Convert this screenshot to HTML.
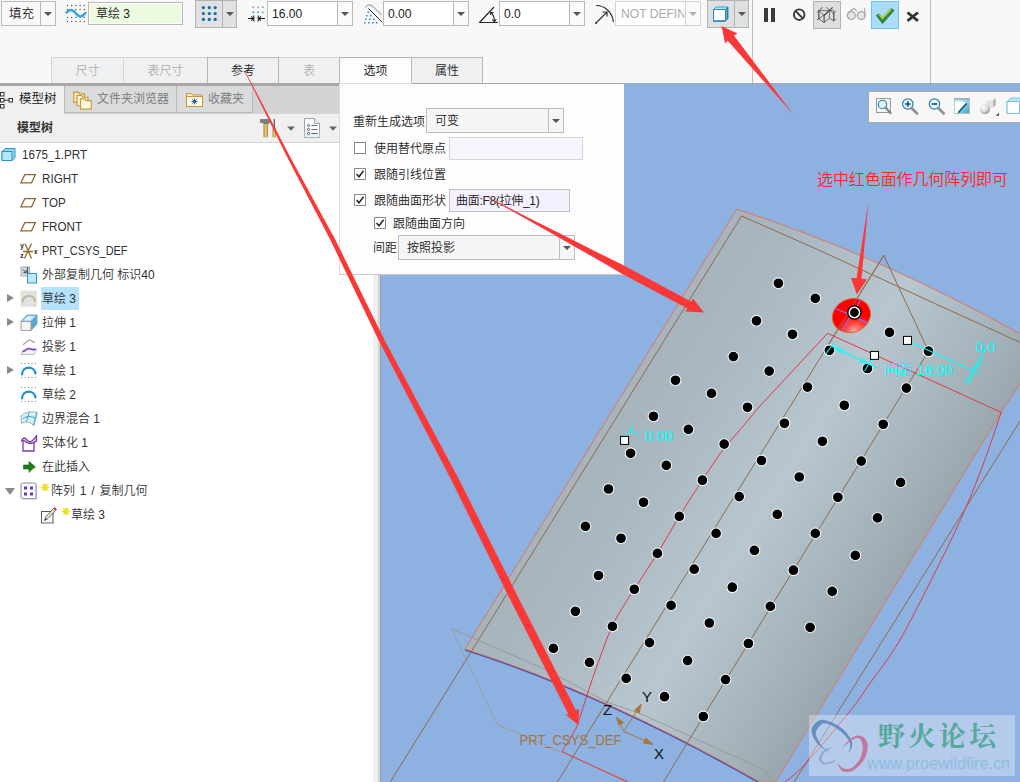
<!DOCTYPE html>
<html lang="zh-CN">
<head>
<meta charset="utf-8">
<title>Creo 几何阵列</title>
<style>
html,body{margin:0;padding:0;}
body{width:1020px;height:782px;overflow:hidden;position:relative;background:#f8f8f8;
 font-family:"Liberation Sans","Noto Sans CJK SC",sans-serif;font-size:12px;color:#222;font-weight:350;}
.abs{position:absolute;}
#ribbon{left:0;top:0;width:1020px;height:83px;background:#f8f8f8;}
#ribline{left:0;top:82px;width:1020px;height:1px;background:#a6a6a6;border-top:1px solid #fff;}
.combo{position:absolute;top:1px;height:23px;border:1px solid #b9b9b9;background:#fff;box-sizing:border-box;}
.combo .txt{position:absolute;left:5px;top:0;line-height:22px;font-size:13px;color:#222;white-space:nowrap;}
.combo .dd{position:absolute;right:0;top:0;bottom:0;width:14px;border-left:1px solid #b9b9b9;background:#fafafa;}
.tri{position:absolute;width:0;height:0;border-left:4px solid transparent;border-right:4px solid transparent;border-top:4px solid #555;}
.combo .dd .tri{left:3px;top:9px;}
.tab{position:absolute;top:57px;height:26px;box-sizing:border-box;border:1px solid #d4d4d4;border-bottom:none;background:#eef0f2;
 text-align:center;line-height:26px;font-size:12px;color:#b0b0b0;}
.tab.on{color:#222;border-color:#b6b6b6;z-index:1;}
.tab.act{background:#fdfdfd;color:#111;border-color:#b6b6b6;border-bottom:1px solid #dedede;z-index:1;}
.vsep{position:absolute;top:0;width:1px;height:83px;background:#bdbdbd;}
#view{left:381px;top:84px;width:639px;height:698px;background:#8db1e1;}
#tree{left:0;top:143px;width:373px;height:639px;background:#fff;}
#split1{left:373px;top:84px;width:5px;height:698px;background:#eef0f2;border-right:2px solid #d2d3d5;}
#split2{left:380px;top:84px;width:1px;height:698px;background:#a0a0a0;}
#pband{left:0;top:84px;width:339px;height:2px;background:#a8a8a8;}
#ptabs{left:0;top:86px;width:339px;height:28px;background:#d1d3d5;}
.ptab{position:absolute;top:0;height:26px;box-sizing:border-box;border-right:1px solid #bcbcbc;border-bottom:1px solid #bcbcbc;color:#777;font-size:12px;line-height:25px;white-space:nowrap;background:#d9dbdd;}
.ptab.act{background:#f0f0f1;color:#111;border-bottom:none;height:27px;}
#phead{left:0;top:114px;width:339px;height:28px;background:#f0f0f1;}
#pheadline{left:0;top:142px;width:339px;height:1px;background:#d3d3d3;}
.row{position:absolute;left:0;height:24px;line-height:24px;font-size:12px;color:#303030;white-space:nowrap;font-weight:350;}
#opt{left:339px;top:84px;width:285px;height:191px;background:#fdfdfd;box-sizing:border-box;border-left:1px solid #dcdcdc;border-bottom:1px solid #c9c9c9;}
.cb{position:absolute;width:11px;height:11px;border:1px solid #8a8a8a;background:#fff;box-sizing:border-box;}
.olab{position:absolute;font-size:12px;color:#222;white-space:nowrap;line-height:14px;margin-top:1px;}
svg{position:absolute;left:0;top:0;}
.lat{display:inline-block;transform:scaleX(.93);transform-origin:0 50%;font-size:12.5px;}
.ptab span{white-space:nowrap;}
</style>
</head>
<body>
<div class="abs" id="ribbon"></div>
<div class="abs" id="ribline"></div>
<div class="abs" id="view"></div>
<div class="abs" id="tree"></div>
<div class="abs" id="split1"></div>
<div class="abs" id="split2"></div>
<div class="abs" id="pband"></div>
<div class="abs" id="ptabs"></div>
<div class="abs" id="phead"></div>
<div class="abs" id="pheadline"></div>
<div class="abs" id="opt"></div>
<!-- ===== ribbon controls ===== -->
<div class="combo" style="left:1px;width:55px;top:1px;height:25px;background:#f9f9f9"><span class="txt" style="left:7px;line-height:24px;font-size:12.5px">填充</span><span class="dd" style="background:#f9f9f9"><i class="tri" style="top:10px"></i></span></div>
<svg style="left:64px;top:2px" width="24" height="24" viewBox="0 0 24 24">
 <g fill="#555"><circle cx="3.5" cy="3.5" r=".7"/><circle cx="7.7" cy="3.5" r=".7"/><circle cx="11.9" cy="3.5" r=".7"/><circle cx="16.1" cy="3.5" r=".7"/><circle cx="20.3" cy="3.5" r=".7"/>
 <circle cx="3.5" cy="7.5" r=".7"/><circle cx="20.3" cy="7.5" r=".7"/><circle cx="11.9" cy="7.5" r=".7"/><circle cx="16.1" cy="7.5" r=".7"/>
 <circle cx="3.5" cy="15.5" r=".7"/><circle cx="7.7" cy="15.5" r=".7"/><circle cx="11.9" cy="15.5" r=".7"/><circle cx="20.3" cy="15.5" r=".7"/>
 <circle cx="3.5" cy="19.5" r=".7"/><circle cx="7.7" cy="19.5" r=".7"/><circle cx="11.9" cy="19.5" r=".7"/><circle cx="16.1" cy="19.5" r=".7"/><circle cx="20.3" cy="19.5" r=".7"/></g>
 <path d="M2.5,10.5 C6,6.5 9,7.5 12,11.5 S18,15.5 21.5,11" fill="none" stroke="#35a0dc" stroke-width="2.4" stroke-linecap="round"/>
</svg>
<div class="combo" style="left:88px;top:2px;width:95px;height:23px;background:#ecfbdf;box-shadow:inset 0 0 0 1px #fff"><span class="txt" style="left:7px;line-height:23px;font-size:12px">草绘 3</span></div>
<div class="abs" style="left:195px;top:0;width:42px;height:28px;box-sizing:border-box;border:1px solid #b2b2b2;background:#dfe1e3">
 <div class="abs" style="left:26px;top:0;width:1px;height:26px;background:#b2b2b2"></div><i class="tri" style="left:30px;top:11px"></i>
 <svg style="left:3px;top:3px" width="20" height="20" viewBox="0 0 20 20"><g fill="#0a70a6"><circle cx="4.4" cy="3.6" r="1.6"/><circle cx="10.3" cy="3.6" r="1.6"/><circle cx="16.2" cy="3.6" r="1.6"/><circle cx="4.4" cy="9.5" r="1.6"/><circle cx="10.3" cy="9.5" r="1.6"/><circle cx="16.2" cy="9.5" r="1.6"/><circle cx="4.4" cy="15.4" r="1.6"/><circle cx="10.3" cy="15.4" r="1.6"/><circle cx="16.2" cy="15.4" r="1.6"/></g></svg>
</div>
<svg style="left:246px;top:2px" width="22" height="24" viewBox="0 0 22 24">
 <g fill="#9a9a9a"><rect x="6.5" y="4.5" width="1.6" height="1.6"/><rect x="11.2" y="4.5" width="1.6" height="1.6"/><rect x="16" y="4.5" width="1.6" height="1.6"/></g>
 <g fill="#1c8ed0"><rect x="6.5" y="9.5" width="1.6" height="1.6"/><rect x="11.2" y="9.5" width="1.6" height="1.6"/></g><rect x="16" y="9.5" width="1.6" height="1.6" fill="#9a9a9a"/>
 <g stroke="#222" stroke-width="1.1" fill="none"><path d="M2,16.5H7.6M7.8,13.5V19.5M12.2,13.5V19.5M12.6,16.5H19"/><path d="M5.2,14.3L7.4,16.5L5.2,18.7M15,14.3L12.8,16.5L15,18.7"/></g>
</svg>
<div class="combo" style="left:267px;width:86px;top:1px;height:25px"><span class="txt" style="left:4px;line-height:24px;transform:scaleX(.93);transform-origin:0 50%">16.00</span><span class="dd"><i class="tri" style="top:10px"></i></span></div>
<svg style="left:362px;top:2px" width="22" height="24" viewBox="0 0 22 24">
 <path d="M3,5.5 C7,1.5 9,2.5 12,5.5 L19.5,13" fill="none" stroke="#b9b9b9" stroke-width="1.6"/>
 <path d="M6.5,6.5 L20,20" fill="none" stroke="#222" stroke-width="1"/>
 <g fill="#1c8ed0"><rect x="5.5" y="9.5" width="1.5" height="1.5"/><rect x="4" y="13" width="1.5" height="1.5"/><rect x="8" y="13" width="1.5" height="1.5"/><rect x="3" y="16.5" width="1.5" height="1.5"/><rect x="7" y="16.5" width="1.5" height="1.5"/><rect x="11" y="16.5" width="1.5" height="1.5"/><rect x="2" y="20" width="1.5" height="1.5"/><rect x="6" y="20" width="1.5" height="1.5"/><rect x="10" y="20" width="1.5" height="1.5"/><rect x="14" y="20" width="1.5" height="1.5"/></g>
</svg>
<div class="combo" style="left:383px;width:86px;top:1px;height:25px"><span class="txt" style="left:4px;line-height:24px;transform:scaleX(.93);transform-origin:0 50%">0.00</span><span class="dd"><i class="tri" style="top:10px"></i></span></div>
<svg style="left:477px;top:2px" width="24" height="24" viewBox="0 0 24 24">
 <g stroke="#222" stroke-width="1.1" fill="none"><path d="M2,20.5H21M2.5,20.5L17,5"/><path d="M14,10.5C16.5,13 17.5,16 17.3,19.5"/><path d="M13.5,13L13.8,10.3L16.5,10.6M15.3,17.5L17.3,19.7L19.2,17.4"/></g>
</svg>
<div class="combo" style="left:499px;width:86px;top:1px;height:25px"><span class="txt" style="left:4px;line-height:24px;transform:scaleX(.93);transform-origin:0 50%">0.0</span><span class="dd"><i class="tri" style="top:10px"></i></span></div>
<svg style="left:592px;top:2px" width="24" height="24" viewBox="0 0 24 24">
 <g stroke="#333" stroke-width="1.2" fill="none"><path d="M4,3.5C13,3.5 20,10 21.5,20"/><path d="M4,21L15,10M10.5,10H15V14.5"/></g><circle cx="4" cy="21" r="1.1" fill="#333"/>
</svg>
<div class="combo" style="left:615px;width:86px;top:1px;height:25px;border-color:#d3d3d3"><span class="txt" style="left:5px;line-height:24px;color:#a9a9a9;width:68px;overflow:hidden;transform:scaleX(.93);transform-origin:0 50%">NOT DEFINED</span><span class="dd" style="border-color:#d3d3d3"><i class="tri" style="top:10px;border-top-color:#b0b0b0"></i></span></div>
<div class="abs" style="left:707px;top:0;width:42px;height:28px;box-sizing:border-box;border:1px solid #b2b2b2;background:#dfe0e2">
 <div class="abs" style="left:26px;top:0;width:1px;height:26px;background:#b2b2b2"></div><i class="tri" style="left:30px;top:11px"></i>
 <svg style="left:0;top:0" width="26" height="26" viewBox="0 0 26 26"><defs><linearGradient id="gcr" x1="0" x2="1"><stop offset="0" stop-color="#8accE4"/><stop offset="1" stop-color="#166f9c"/></linearGradient></defs><path d="M5.500,8.500L8,6H20L17.500,8.500Z" fill="#a9e5f8" stroke="#2a8cc0" stroke-width=".8"/><path d="M17.500,8.500L20,6V17.500L17.500,20Z" fill="url(#gcr)" stroke="#1c78a8" stroke-width=".8"/><rect x="5.500" y="8.500" width="12" height="11.500" fill="#fff" stroke="#2a8cc0" stroke-width="1"/><path d="M5.500,20.100H17.500" stroke="#1a78a8" stroke-width="1.200"/></svg>
</div>
<div class="vsep" style="left:752px"></div>
<div class="vsep" style="left:930px"></div>
<div class="abs" style="left:764px;top:8px;width:4px;height:14px;background:#3b3b3b"></div>
<div class="abs" style="left:771px;top:8px;width:4px;height:14px;background:#3b3b3b"></div>
<svg style="left:791px;top:6px" width="18" height="18" viewBox="0 0 18 18"><circle cx="8.2" cy="8.7" r="5.3" fill="none" stroke="#3b3b3b" stroke-width="1.9"/><path d="M4.6,5 L11.8,12.4" stroke="#3b3b3b" stroke-width="1.9"/></svg>
<div class="abs" style="left:813px;top:1px;width:28px;height:28px;box-sizing:border-box;border:1px solid #b2b2b2;background:#dcdee0">
 <svg style="left:0;top:0" width="26" height="26" viewBox="0 0 26 26"><g stroke="#555" stroke-width=".8" fill="none"><path d="M4.800,8.600H19.800M4.800,8.600L10.100,13.600M4.800,16.800L10.100,20.600L15.400,16.200L19.800,18.600M15.400,8.600V16.200M12.200,5.100L19.800,12M4.800,16.800L15.400,8.600"/><path d="M3.100,10.600L8.600,5.100M3.100,17.700L5.500,16.300M21.900,8.900L19,11.200M21.900,17.100L19.200,19.200" stroke-width="1"/></g><g stroke="#444" stroke-width="1.100" fill="none"><path d="M4.800,8.600V16.800M10.100,13.600V20.600M10.100,13.600L18.600,5.400M19.800,9.800V18.600"/></g></svg>
</div>
<svg style="left:846px;top:6px" width="22" height="16" viewBox="0 0 22 16"><g stroke="#aaa" stroke-width="1.4" fill="#e6e6e6"><circle cx="5.3" cy="9.5" r="3.9"/><circle cx="15.2" cy="9.5" r="3.9"/></g><path d="M2.400,6.600L8.100,2.300L11,5.300M18.500,2.300L19.100,9" stroke="#aaa" stroke-width="1.200" fill="none"/></svg>
<div class="abs" style="left:871px;top:1px;width:28px;height:28px;box-sizing:border-box;border:1px solid #6ec2f2;background:#a9ddfa">
 <svg style="left:2px;top:4px" width="22" height="20" viewBox="0 0 22 20"><path d="M2.5,9.5L5,8L8.5,11.5L17,2.5L20,4.5L8.5,17.5Z" fill="#2f8f3a" stroke="#1e6a2a" stroke-width=".8"/><path d="M5,8.6L8.5,12.2L17.2,3.2" stroke="#c3dc3a" stroke-width="1.3" fill="none"/></svg>
</div>
<svg style="left:905px;top:10px" width="16" height="14" viewBox="0 0 16 14"><path d="M2.5,2.5L13,10.8M13,2.5L2.5,10.8" stroke="#333" stroke-width="2.8"/></svg>
<!-- ===== dashboard tabs ===== -->
<div class="tab" style="left:51px;width:73px">尺寸</div>
<div class="tab" style="left:123px;width:85px">表尺寸</div>
<div class="tab on" style="left:207px;width:72px">参考</div>
<div class="tab" style="left:278px;width:62px">表</div>
<div class="tab act" style="left:339px;width:73px;height:27px">选项</div>
<div class="tab on" style="left:411px;width:72px">属性</div>
<!-- ===== options slide-down panel ===== -->
<div class="olab" style="left:353px;top:114px">重新生成选项</div>
<div class="combo" style="left:426px;top:108px;width:138px;height:25px;background:#f5f5f5;border-color:#bdbdbd"><span class="txt" style="left:8px;line-height:24px;font-size:12px">可变</span><span class="dd" style="background:#f5f5f5;border-color:#bdbdbd"><i class="tri" style="top:10px"></i></span></div>
<div class="cb" style="left:354px;top:142px;width:12px;height:12px"></div>
<div class="olab" style="left:374px;top:141px">使用替代原点</div>
<div class="abs" style="left:449px;top:137px;width:134px;height:23px;box-sizing:border-box;border:1px solid #d6d6d6;background:#f7f5fd"></div>
<div class="cb" style="left:354px;top:168px;width:12px;height:12px"><svg width="10" height="10" viewBox="0 0 10 10"><path d="M1.500,5L4,7.800L8.600,1.800" fill="none" stroke="#222" stroke-width="1.500"/></svg></div>
<div class="olab" style="left:374px;top:167px">跟随引线位置</div>
<div class="cb" style="left:354px;top:194px;width:12px;height:12px"><svg width="10" height="10" viewBox="0 0 10 10"><path d="M1.500,5L4,7.800L8.600,1.800" fill="none" stroke="#222" stroke-width="1.500"/></svg></div>
<div class="olab" style="left:374px;top:193px">跟随曲面形状</div>
<div class="abs" style="left:449px;top:189px;width:121px;height:23px;box-sizing:border-box;border:1px solid #bfbfbf;background:#f4f0fd"><span style="position:absolute;left:6px;top:1px;line-height:21px;font-size:12px;white-space:nowrap;color:#222;letter-spacing:-.3px">曲面:F8(拉伸_1)</span></div>
<div class="cb" style="left:374px;top:217px;width:12px;height:12px"><svg width="10" height="10" viewBox="0 0 10 10"><path d="M1.500,5L4,7.800L8.600,1.800" fill="none" stroke="#222" stroke-width="1.500"/></svg></div>
<div class="olab" style="left:393px;top:216px">跟随曲面方向</div>
<div class="olab" style="left:373px;top:240px">间距</div>
<div class="combo" style="left:398px;top:235px;width:177px;height:25px;background:#f5f5f5;border-color:#bdbdbd"><span class="txt" style="left:8px;line-height:24px;font-size:12px">按照投影</span><span class="dd" style="background:#f5f5f5;border-color:#bdbdbd"><i class="tri" style="top:10px"></i></span></div>
<!-- ===== in-graphics view toolbar ===== -->
<div class="abs" style="left:868px;top:91px;width:160px;height:32px;box-sizing:border-box;border:1px solid #a9a9a9;background:#f7f7f7"></div>
<svg style="left:872px;top:94px" width="148" height="26" viewBox="0 0 148 26">
 <rect x="4.500" y="4.500" width="14" height="14" fill="#f4f4f4" stroke="#9a9a9a"/><circle cx="10.500" cy="10.500" r="4.200" fill="#dff2fb" stroke="#2a7aa8" stroke-width="1.100"/><path d="M13.500,13.500L18.500,19" stroke="#888" stroke-width="2.400" stroke-linecap="round"/>
 <circle cx="35.800" cy="10" r="5.200" fill="#eaf6fc" stroke="#2a7aa8" stroke-width="1.200"/><path d="M33,10h5.600M35.800,7.200v5.600" stroke="#0a5a8a" stroke-width="1.700"/><path d="M39.500,14L45,19.500" stroke="#909090" stroke-width="2.600" stroke-linecap="round"/>
 <circle cx="62.500" cy="10" r="5.200" fill="#eaf6fc" stroke="#2a7aa8" stroke-width="1.200"/><path d="M59.700,10h5.600" stroke="#0a5a8a" stroke-width="1.700"/><path d="M66.200,14L71.700,19.500" stroke="#909090" stroke-width="2.600" stroke-linecap="round"/>
 <defs><linearGradient id="grp" x1="0" y1="0" x2="1" y2="1"><stop offset="0" stop-color="#c4ecf6"/><stop offset=".55" stop-color="#8fd0e2"/><stop offset="1" stop-color="#3f9fbe"/></linearGradient><radialGradient id="gsp" cx=".38" cy=".32" r=".7"><stop offset="0" stop-color="#fff"/><stop offset=".6" stop-color="#d6d6d6"/><stop offset="1" stop-color="#8e8e8e"/></radialGradient></defs>
 <rect x="82.500" y="4.500" width="15" height="15" fill="url(#grp)" stroke="#b4bcc0" stroke-width=".8"/><path d="M82.200,4.900H97.800" stroke="#9a9a9a" stroke-width="1"/><path d="M82.900,8.400C86,6.800 91.500,7 94.800,9.200L86,19.100H82.900Z" fill="#fff"/><path d="M94.600,9.400L86.200,18.700" stroke="#0a5a82" stroke-width="1.700"/>
 <path d="M114.500,6.500L117.500,4H123.700L120.800,6.500Z" fill="#f6f6f6"/><path d="M120.800,6.500L123.700,4V11.300L120.800,13.600Z" fill="#b4b4b4"/><rect x="114.500" y="6.500" width="6.300" height="7.100" fill="#e2e2e2"/><circle cx="113" cy="15.200" r="4.900" fill="url(#gsp)"/><path d="M123.700,21.700h3.300v-3z" fill="#444"/>
 <path d="M135.100,7.500L139,4H150V19.500H135.100Z" fill="#bfe6f7" stroke="#7cc4e4"/><rect x="135.100" y="7.500" width="12.400" height="12" fill="#fff" stroke="#7cc4e4"/>
</svg>

<!-- ===== navigator tabs ===== -->
<div class="abs" style="left:0;top:86px;width:339px;height:28px">
<div class="ptab act" style="left:0;width:65px;height:28px;line-height:27px"><svg style="left:0;top:4px" width="18" height="20" viewBox="0 0 18 20"><g fill="#fff" stroke="#333" stroke-width="1"><rect x=".5" y="2.500" width="3.500" height="3.500"/><rect x=".5" y="8.500" width="3.500" height="3.500"/><rect x=".5" y="14.500" width="3.500" height="3.500"/><rect x="9" y="8.500" width="3.500" height="3.500"/></g><path d="M4,10.250H9" stroke="#333"/></svg><span style="position:absolute;left:19px;top:0;color:#111;font-size:12.5px">模型树</span></div>
<div class="ptab" style="left:65px;width:112px;height:27px;line-height:27px"><svg style="left:7px;top:2px" width="25" height="23" viewBox="0 0 22 20"><g stroke="#c89a3c" stroke-width="1" fill="#fbe7b8"><path d="M1.5,3.5h4l1,1.5h4.5v7.5h-9.5z"/><path d="M4.500,6.500h4l1,1.5h4.5v7.500h-9.500z" fill="#fdf0d0"/><path d="M7.500,9.500h4l1,1.500h4.500v7.500h-9.500z" fill="#fff5dc"/></g></svg><span style="position:absolute;left:32px;top:0">文件夹浏览器</span></div>
<div class="ptab" style="left:177px;width:76px;height:27px;line-height:27px"><svg style="left:8px;top:4px" width="20" height="20" viewBox="0 0 20 20"><path d="M1.5,3.500h5l1.200,1.500h9.800v11.500h-16z" fill="#fbe7b8" stroke="#c89a3c"/><rect x="1.500" y="6.500" width="16" height="10" fill="#fff8e4" stroke="#c89a3c"/><path d="M9.500,8.500v6M6.500,11.500h6M7.400,9.400l4.200,4.200M11.600,9.400l-4.200,4.200" stroke="#1c66b0" stroke-width="1"/></svg><span style="position:absolute;left:31px;top:0">收藏夹</span></div>
</div>
<div class="abs" style="left:17px;top:114px;line-height:28px;font-size:12px;font-weight:bold;color:#333;letter-spacing:0">模型树</div>
<svg style="left:258px;top:116px" width="82" height="24" viewBox="0 0 82 24"><defs><linearGradient id="gw" x1="0" x2="1"><stop offset="0" stop-color="#a67c2a"/><stop offset=".5" stop-color="#f0d58a"/><stop offset="1" stop-color="#a67c2a"/></linearGradient></defs><rect x="5.500" y="7" width="4.500" height="14.500" rx="1" fill="url(#gw)"/><path d="M2.500,3.500h9.500v3h-1.500v1h-5v-1h-3z" fill="#808080" stroke="#5a5a5a" stroke-width=".6"/><rect x="14.500" y="12" width="3.600" height="9.500" rx="1" fill="url(#gw)"/><path d="M16.300,3v9.500" stroke="#666" stroke-width="1.400"/><path d="M29,10.500h8l-4,4.200z" fill="#666"/><path d="M46.500,2.500h10l5,5v14h-15z" fill="#fdfdfd" stroke="#9aa4ac"/><path d="M56.500,2.500v5h5" fill="#e6eef2" stroke="#9aa4ac"/><path d="M46.500,15.500h15v6h-15z" fill="#d8e8ee" opacity=".6"/><g fill="none" stroke="#555" stroke-width=".9"><circle cx="50.500" cy="9.500" r="1.100"/><circle cx="50.500" cy="13.500" r="1.100"/><circle cx="50.500" cy="17.500" r="1.100"/><path d="M53.500,9.500h6M53.500,13.500h6M53.500,17.500h6"/></g><path d="M71,10.500h8l-4,4.200z" fill="#666"/></svg>
<!-- ===== model tree ===== -->
<div class="row" style="top:143px;width:373px">
<svg style="left:1px;top:4px" width="16" height="16" viewBox="0 0 16 16"><path d="M1,4.500L4,1.500H14V10.500L11,13.500H1Z" fill="#8fd4f0" stroke="#2a96c8"/><rect x="1" y="4.500" width="10" height="9" fill="#b5e6f8" stroke="#2a96c8"/></svg>
<span style="position:absolute;left:22px;top:0"><span class="lat">1675_1.PRT</span></span>
</div>
<div class="row" style="top:167px;width:373px">
<svg style="left:19px;top:4px" width="20" height="16" viewBox="0 0 20 16"><path d="M5.800,3.700H16.300L12.500,11.800H1.900Z" fill="none" stroke="#8b6a30" stroke-width="1.300"/></svg>
<span style="position:absolute;left:42px;top:0"><span class="lat">RIGHT</span></span>
</div>
<div class="row" style="top:191px;width:373px">
<svg style="left:19px;top:4px" width="20" height="16" viewBox="0 0 20 16"><path d="M5.800,3.700H16.300L12.500,11.800H1.900Z" fill="none" stroke="#8b6a30" stroke-width="1.300"/></svg>
<span style="position:absolute;left:42px;top:0"><span class="lat">TOP</span></span>
</div>
<div class="row" style="top:215px;width:373px">
<svg style="left:19px;top:4px" width="20" height="16" viewBox="0 0 20 16"><path d="M5.800,3.700H16.300L12.500,11.800H1.900Z" fill="none" stroke="#8b6a30" stroke-width="1.300"/></svg>
<span style="position:absolute;left:42px;top:0"><span class="lat">FRONT</span></span>
</div>
<div class="row" style="top:239px;width:373px">
<svg style="left:19px;top:3px" width="20" height="18" viewBox="0 0 20 18"><g stroke="#9a6a2a" stroke-width="1.300" fill="none"><path d="M4,9.500H14M6,1.500L12.500,16.500M12.500,1.500L5.500,16.500"/></g><g fill="#222" font-family="Liberation Sans,sans-serif" font-size="6.500" font-weight="bold"><text x="1.200" y="6">y</text><text x="1.200" y="16">z</text><text x="15" y="12">x</text></g></svg>
<span style="position:absolute;left:42px;top:0"><span class="lat" style="transform:scaleX(.875)">PRT_CSYS_DEF</span></span>
</div>
<div class="row" style="top:263px;width:373px">
<svg style="left:20px;top:3px" width="18" height="18" viewBox="0 0 18 18"><rect x="1" y="1" width="8.500" height="9" fill="#d9d9d9" stroke="#aaa"/><path d="M3,3.500l3,3M6.200,4v2.700H3.500" stroke="#333" fill="none" stroke-width=".9"/><rect x="7.500" y="7.500" width="9" height="9.500" fill="#bfe6f7" stroke="#2a96c8"/><path d="M7.500,1V8" stroke="#2a6a9a" stroke-width="1.200"/></svg>
<span style="position:absolute;left:42px;top:0">外部复制几何 标识40</span>
</div>
<div class="row" style="top:287px;width:373px">
<i style="position:absolute;left:7px;top:7px;width:0;height:0;border-top:4.500px solid transparent;border-bottom:4.500px solid transparent;border-left:7px solid #8a8a8a"></i>
<svg style="left:20px;top:3px" width="18" height="18" viewBox="0 0 18 18"><rect x=".5" y=".5" width="16.500" height="16.500" fill="#e3e3e1"/><g fill="#c9c9c4"><rect x="2" y="2" width="1" height="1"/><rect x="6" y="2" width="1" height="1"/><rect x="10" y="2" width="1" height="1"/><rect x="14" y="2" width="1" height="1"/><rect x="2" y="14" width="1" height="1"/><rect x="6" y="14" width="1" height="1"/><rect x="10" y="14" width="1" height="1"/><rect x="14" y="14" width="1" height="1"/></g><path d="M2.500,12C3.500,4 13.500,4 15,11" fill="none" stroke="#c3bca2" stroke-width="2.200" stroke-linecap="round"/></svg>
<span style="position:absolute;left:41px;top:0;width:38px;height:23px;background:#b4e1fb"></span>
<span style="position:absolute;left:42px;top:0">草绘 3</span>
</div>
<div class="row" style="top:311px;width:373px">
<i style="position:absolute;left:7px;top:7px;width:0;height:0;border-top:4.500px solid transparent;border-bottom:4.500px solid transparent;border-left:7px solid #8a8a8a"></i>
<svg style="left:20px;top:3px" width="18" height="18" viewBox="0 0 18 18"><path d="M1,7.500L7,1H17V10L11,16.500Z" fill="#8cc8e4" stroke="#4a9ac4" stroke-width=".8"/><path d="M11,7.500L17,1V10L11,16.500Z" fill="#5aa8cc"/><path d="M3.500,6.500L8,2.200H15L10.500,6.500Z" fill="#dff2fa"/><rect x="1" y="7.500" width="10" height="9" fill="#f2f2f2" stroke="#999" stroke-width=".9"/></svg>
<span style="position:absolute;left:42px;top:0">拉伸 1</span>
</div>
<div class="row" style="top:335px;width:373px">
<svg style="left:20px;top:3px" width="18" height="18" viewBox="0 0 18 18"><path d="M3,6.500C6,6 7,1.500 10,2S12,5 15,4" fill="none" stroke="#999" stroke-width="1.100"/><path d="M1,16.500L4,11H17L14,16.500Z" fill="#f4f4f4" stroke="#aaa" stroke-width=".8"/><path d="M2.500,13.500C5.500,14.500 6.500,9.500 9.500,10.500S12,13 15.500,11" fill="none" stroke="#8a32c8" stroke-width="1.500"/></svg>
<span style="position:absolute;left:42px;top:0">投影 1</span>
</div>
<div class="row" style="top:359px;width:373px">
<i style="position:absolute;left:7px;top:7px;width:0;height:0;border-top:4.500px solid transparent;border-bottom:4.500px solid transparent;border-left:7px solid #8a8a8a"></i>
<svg style="left:19px;top:3px" width="20" height="18" viewBox="0 0 20 18"><g fill="#777"><rect x="2" y="1" width="1" height="1"/><rect x="5.500" y="1" width="1" height="1"/><rect x="9" y="1" width="1" height="1"/><rect x="12.500" y="1" width="1" height="1"/><rect x="16" y="1" width="1" height="1"/><rect x="2" y="15" width="1" height="1"/><rect x="5.500" y="15" width="1" height="1"/><rect x="9" y="15" width="1" height="1"/><rect x="12.500" y="15" width="1" height="1"/><rect x="16" y="15" width="1" height="1"/></g><path d="M3,12.500C3.500,3.500 15.500,3.500 16.500,11.500" fill="none" stroke="#1f90c8" stroke-width="2.200" stroke-linecap="round"/></svg>
<span style="position:absolute;left:42px;top:0">草绘 1</span>
</div>
<div class="row" style="top:383px;width:373px">
<svg style="left:19px;top:3px" width="20" height="18" viewBox="0 0 20 18"><g fill="#777"><rect x="2" y="1" width="1" height="1"/><rect x="5.500" y="1" width="1" height="1"/><rect x="9" y="1" width="1" height="1"/><rect x="12.500" y="1" width="1" height="1"/><rect x="16" y="1" width="1" height="1"/><rect x="2" y="15" width="1" height="1"/><rect x="5.500" y="15" width="1" height="1"/><rect x="9" y="15" width="1" height="1"/><rect x="12.500" y="15" width="1" height="1"/><rect x="16" y="15" width="1" height="1"/></g><path d="M3,12.500C3.500,3.500 15.500,3.500 16.500,11.500" fill="none" stroke="#1f90c8" stroke-width="2.200" stroke-linecap="round"/></svg>
<span style="position:absolute;left:42px;top:0">草绘 2</span>
</div>
<div class="row" style="top:407px;width:373px">
<svg style="left:20px;top:3px" width="18" height="18" viewBox="0 0 18 18"><path d="M1,6C5,2 11,1 17,2.500L13.500,15.500C10,11.500 5,11 1.500,13.500Z" fill="#dff1f8" stroke="#8aa" stroke-width=".9"/><path d="M9,2.500L6.500,11.500M3,8.500C7,6 11,6 15.500,8" fill="none" stroke="#3a9ac8" stroke-width="1"/><path d="M13.500,15.500L17,2.500" stroke="#5ab0d8" stroke-width="1.500"/></svg>
<span style="position:absolute;left:42px;top:0">边界混合 1</span>
</div>
<div class="row" style="top:431px;width:373px">
<svg style="left:20px;top:2px" width="18" height="20" viewBox="0 0 18 20"><path d="M3,7.500V18H14V7.500" fill="#fff" stroke="#7a3aa8" stroke-width="1.300"/><path d="M1.500,8C3,4 5,4 7,7S12,9.500 16.500,2.500V8C13,11 9,11 7,9.500S3,7 1.500,8Z" fill="#d8c0ec" stroke="#7a3aa8" stroke-width="1.300" stroke-linejoin="round"/></svg>
<span style="position:absolute;left:42px;top:0">实体化 1</span>
</div>
<div class="row" style="top:455px;width:373px">
<svg style="left:22px;top:5px" width="16" height="14" viewBox="0 0 16 14"><path d="M1.500,5H7V1.500L13.500,7L7,12.500V9H1.500Z" fill="#1e7a1e" stroke="#0f5a0f" stroke-width=".6"/><path d="M7,12.500L13.500,7" stroke="#c8d820" stroke-width="1"/></svg>
<span style="position:absolute;left:42px;top:0">在此插入</span>
</div>
<div class="row" style="top:479px;width:373px">
<i style="position:absolute;left:5px;top:9px;width:0;height:0;border-left:5px solid transparent;border-right:5px solid transparent;border-top:7px solid #8a8a8a"></i>
<svg style="left:20px;top:3px" width="18" height="18" viewBox="0 0 18 18"><rect x="1" y="1" width="15" height="15.500" rx="1.500" fill="#fbfbfd" stroke="#8a8a9a"/><path d="M16.500,2V17H2" fill="none" stroke="#b8a8d8" stroke-width="1"/><g fill="#6a38b0"><rect x="4" y="4.500" width="3" height="3"/><rect x="10" y="4.500" width="3" height="3"/><rect x="4" y="10.500" width="3" height="3"/><rect x="10" y="10.500" width="3" height="3"/></g></svg>
<span style="position:absolute;left:41px;top:-3px;color:#f2e600;font-size:10px;font-weight:bold;text-shadow:0 0 .5px #c8b800">✳</span>
<span style="position:absolute;left:51px;top:0"><span style="word-spacing:1.500px">阵列 1 / 复制几何</span></span>
</div>
<div class="row" style="top:503px;width:373px">
<svg style="left:40px;top:2px" width="20" height="20" viewBox="0 0 20 20"><rect x="1.500" y="6.500" width="11.500" height="11.500" fill="#fcfcfc" stroke="#555"/><path d="M1.500,18.500H13.500" stroke="#bbb"/><path d="M4.500,15.500L6,11.500L14.500,2.500L16.500,4.500L8,13.500Z" fill="#e8e0d0" stroke="#444" stroke-width=".8"/><path d="M13.300,3.800L14.500,2.500L16.500,4.500L15.300,5.800Z" fill="#d84040"/><path d="M4.500,15.500L5.300,13.300L6.500,14.500Z" fill="#222"/></svg>
<span style="position:absolute;left:62px;top:-3px;color:#f2e600;font-size:10px;font-weight:bold;text-shadow:0 0 .5px #c8b800">✳</span>
<span style="position:absolute;left:71px;top:0">草绘 3</span>
</div>
<svg width="1020" height="782" viewBox="0 0 1020 782" style="pointer-events:none;z-index:5">
<defs>
<linearGradient id="gsurf" gradientUnits="userSpaceOnUse" x1="736.7" y1="209.2" x2="1019.1" y2="385.7">
<stop offset="0" stop-color="#a7b4bc"/><stop offset="0.15" stop-color="#a8b6bf"/><stop offset="0.55" stop-color="#b8c6cf"/><stop offset="0.9" stop-color="#a1afb7"/><stop offset="1" stop-color="#9aa7af"/>
</linearGradient>
<radialGradient id="gred" cx="0.42" cy="0.98" r="0.5"><stop offset="0" stop-color="#ffb0a8"/><stop offset="0.45" stop-color="#ff5048"/><stop offset="1" stop-color="#ff0000"/></radialGradient>
<clipPath id="vclip"><rect x="381" y="84" width="639" height="698"/></clipPath>
</defs>
<g clip-path="url(#vclip)">
<path d="M736.7,209.2 Q873,252.8 1020,333.7 L1030,339.3 L1030,368.5 L1020,383.7 L1001.2,412.3 L775.5,782 L759.6,782 Q604,693.5 465,649 Z" fill="url(#gsurf)"/>
<path d="M465,649.8 Q604,694.3 759.6,782.8" fill="none" stroke="#3a48b0" stroke-width="1.6"/>
<path d="M736.7,209.2 Q873,252.8 1020,333.7 L1030,339.3 L1030,368.5 L1020,383.7 L1001.2,412.3 L775.5,782 L759.6,782 Q604,693.5 465,649 Z" fill="none" stroke="#e0765c" stroke-width="1"/>
<path d="M546,669.8 L451.4,628.6 L497.5,724.5 L630,782 M546,669.8 L607,702 L640,713.5 L765.5,770.4 L773,782" fill="none" stroke="#9d9a98" stroke-width="1"/>
<path d="M1020,342.4 L927.2,300 L820,250.6 L741.6,216 L664.5,340 L478.4,640 L390.3,782" fill="none" stroke="#8f6a4c" stroke-width="1"/>
<path d="M557.4,782 L883.8,255.3 L928.5,351.2 L703.3,716.5 L663.5,782" fill="none" stroke="#8f6a4c" stroke-width="1"/>
<path d="M1021.5,418.6 L794.2,782" fill="none" stroke="#8f6a4c" stroke-width="1"/>
<path d="M627.2,782 L562.1,751.6 " fill="none" stroke="#e23846" stroke-width="1"/>
<path d="M562.1,751.6 C564.2,748.0 572.0,735.7 574.9,730.2 C577.8,724.7 577.4,724.8 579.5,718.6 C581.6,712.4 584.6,702.3 587.7,693 C590.8,683.7 594.0,673.9 598.1,662.8 C602.2,651.7 607.2,636.8 612.1,626.3 C617.0,615.8 623.5,606.2 627.2,600 C630.9,593.8 629.3,597.1 634.3,589.3 C639.3,581.5 649.9,565.5 657.4,553.4 C664.9,541.2 671.8,528.6 679.3,516.4 C686.8,504.2 697.4,487.9 702.4,480.2 C707.4,472.5 705.4,475.3 709,470 C712.6,464.7 718.8,455.2 724,448.5 C729.2,441.8 734.0,436.9 740,429.8 C746.0,422.7 756.7,410.0 760,406 L827.5,333.3 L1001.2,412.3" fill="none" stroke="#e23846" stroke-width="1"/>
<path d="M1001.2,412.3 C998.4,420.5 990.2,445.5 984.3,461.4 C978.4,477.3 973.0,491.1 965.9,507.5 C958.8,523.9 952.4,537.6 941.4,559.7 C930.4,581.8 911.8,619.4 899.9,640 C888.0,660.6 878.2,671.5 869.8,683.5 C861.4,695.5 860.2,698.5 849.3,712 C838.4,725.5 815.2,753.1 804.5,764.8 C793.8,776.5 788.2,779.1 785,782" fill="none" stroke="#e23846" stroke-width="1"/>
<ellipse cx="851.4" cy="315.6" rx="19.4" ry="16.6" transform="rotate(-22 851.4 315.6)" fill="url(#gred)" stroke="#d8642a" stroke-width="1"/>
<path d="M835.7,308.5 L867,322.6 M860.4,300.3 L842,330.5" stroke="#8a6cff" stroke-width="1.2" fill="none"/>
<path d="M883.8,255.3 L824.5,351" fill="none" stroke="#8f6a4c" stroke-width="1"/>
<circle cx="675.5" cy="380.3" r="5.4" fill="#000" stroke="#f4f8fa" stroke-width="1.1"/>
<circle cx="653.5" cy="416.3" r="5.4" fill="#000" stroke="#f4f8fa" stroke-width="1.1"/>
<circle cx="630.6" cy="453.3" r="5.4" fill="#000" stroke="#f4f8fa" stroke-width="1.1"/>
<circle cx="608.5" cy="489" r="5.4" fill="#000" stroke="#f4f8fa" stroke-width="1.1"/>
<circle cx="585.4" cy="526.4" r="5.4" fill="#000" stroke="#f4f8fa" stroke-width="1.1"/>
<circle cx="778.4" cy="283.3" r="5.4" fill="#000" stroke="#f4f8fa" stroke-width="1.1"/>
<circle cx="756.5" cy="320.8" r="5.4" fill="#000" stroke="#f4f8fa" stroke-width="1.1"/>
<circle cx="733.4" cy="356.6" r="5.4" fill="#000" stroke="#f4f8fa" stroke-width="1.1"/>
<circle cx="711.5" cy="393.4" r="5.4" fill="#000" stroke="#f4f8fa" stroke-width="1.1"/>
<circle cx="688.4" cy="429.4" r="5.4" fill="#000" stroke="#f4f8fa" stroke-width="1.1"/>
<circle cx="666.3" cy="465.4" r="5.4" fill="#000" stroke="#f4f8fa" stroke-width="1.1"/>
<circle cx="643.5" cy="502.3" r="5.4" fill="#000" stroke="#f4f8fa" stroke-width="1.1"/>
<circle cx="621" cy="538.3" r="5.4" fill="#000" stroke="#f4f8fa" stroke-width="1.1"/>
<circle cx="598.5" cy="575.5" r="5.4" fill="#000" stroke="#f4f8fa" stroke-width="1.1"/>
<circle cx="575.4" cy="611.3" r="5.4" fill="#000" stroke="#f4f8fa" stroke-width="1.1"/>
<circle cx="553.4" cy="648.4" r="5.4" fill="#000" stroke="#f4f8fa" stroke-width="1.1"/>
<circle cx="815.3" cy="298.4" r="5.4" fill="#000" stroke="#f4f8fa" stroke-width="1.1"/>
<circle cx="792.5" cy="334.3" r="5.4" fill="#000" stroke="#f4f8fa" stroke-width="1.1"/>
<circle cx="769.2" cy="371.1" r="5.4" fill="#000" stroke="#f4f8fa" stroke-width="1.1"/>
<circle cx="747.5" cy="407.3" r="5.4" fill="#000" stroke="#f4f8fa" stroke-width="1.1"/>
<circle cx="724.2" cy="444.1" r="5.4" fill="#000" stroke="#f4f8fa" stroke-width="1.1"/>
<circle cx="702.4" cy="480.2" r="5.4" fill="#000" stroke="#f4f8fa" stroke-width="1.1"/>
<circle cx="679.3" cy="516.4" r="5.4" fill="#000" stroke="#f4f8fa" stroke-width="1.1"/>
<circle cx="657.4" cy="553.4" r="5.4" fill="#000" stroke="#f4f8fa" stroke-width="1.1"/>
<circle cx="634.3" cy="589.3" r="5.4" fill="#000" stroke="#f4f8fa" stroke-width="1.1"/>
<circle cx="612.4" cy="626.4" r="5.4" fill="#000" stroke="#f4f8fa" stroke-width="1.1"/>
<circle cx="589.5" cy="662.4" r="5.4" fill="#000" stroke="#f4f8fa" stroke-width="1.1"/>
<circle cx="829.4" cy="350.3" r="5.4" fill="#000" stroke="#f4f8fa" stroke-width="1.1"/>
<circle cx="807.5" cy="387.1" r="5.4" fill="#000" stroke="#f4f8fa" stroke-width="1.1"/>
<circle cx="784.4" cy="423.3" r="5.4" fill="#000" stroke="#f4f8fa" stroke-width="1.1"/>
<circle cx="761.5" cy="460.5" r="5.4" fill="#000" stroke="#f4f8fa" stroke-width="1.1"/>
<circle cx="739.2" cy="496.6" r="5.4" fill="#000" stroke="#f4f8fa" stroke-width="1.1"/>
<circle cx="716.1" cy="533.4" r="5.4" fill="#000" stroke="#f4f8fa" stroke-width="1.1"/>
<circle cx="694.2" cy="569.2" r="5.4" fill="#000" stroke="#f4f8fa" stroke-width="1.1"/>
<circle cx="671.1" cy="605.4" r="5.4" fill="#000" stroke="#f4f8fa" stroke-width="1.1"/>
<circle cx="649.5" cy="642.6" r="5.4" fill="#000" stroke="#f4f8fa" stroke-width="1.1"/>
<circle cx="626.2" cy="678.4" r="5.4" fill="#000" stroke="#f4f8fa" stroke-width="1.1"/>
<circle cx="889.5" cy="332.4" r="5.4" fill="#000" stroke="#f4f8fa" stroke-width="1.1"/>
<circle cx="867.4" cy="368.5" r="5.4" fill="#000" stroke="#f4f8fa" stroke-width="1.1"/>
<circle cx="844.3" cy="405.3" r="5.4" fill="#000" stroke="#f4f8fa" stroke-width="1.1"/>
<circle cx="822.4" cy="441.3" r="5.4" fill="#000" stroke="#f4f8fa" stroke-width="1.1"/>
<circle cx="799.3" cy="477" r="5.4" fill="#000" stroke="#f4f8fa" stroke-width="1.1"/>
<circle cx="777.3" cy="514.4" r="5.4" fill="#000" stroke="#f4f8fa" stroke-width="1.1"/>
<circle cx="754.4" cy="550.4" r="5.4" fill="#000" stroke="#f4f8fa" stroke-width="1.1"/>
<circle cx="732.3" cy="587.2" r="5.4" fill="#000" stroke="#f4f8fa" stroke-width="1.1"/>
<circle cx="709.4" cy="623" r="5.4" fill="#000" stroke="#f4f8fa" stroke-width="1.1"/>
<circle cx="687.6" cy="660.6" r="5.4" fill="#000" stroke="#f4f8fa" stroke-width="1.1"/>
<circle cx="664.5" cy="696.7" r="5.4" fill="#000" stroke="#f4f8fa" stroke-width="1.1"/>
<circle cx="928.5" cy="351.2" r="5.4" fill="#000" stroke="#f4f8fa" stroke-width="1.1"/>
<circle cx="906.4" cy="388.1" r="5.4" fill="#000" stroke="#f4f8fa" stroke-width="1.1"/>
<circle cx="883.2" cy="424.3" r="5.4" fill="#000" stroke="#f4f8fa" stroke-width="1.1"/>
<circle cx="861.3" cy="461.1" r="5.4" fill="#000" stroke="#f4f8fa" stroke-width="1.1"/>
<circle cx="837.9" cy="497.3" r="5.4" fill="#000" stroke="#f4f8fa" stroke-width="1.1"/>
<circle cx="815.3" cy="533.4" r="5.4" fill="#000" stroke="#f4f8fa" stroke-width="1.1"/>
<circle cx="793.4" cy="570.2" r="5.4" fill="#000" stroke="#f4f8fa" stroke-width="1.1"/>
<circle cx="770.3" cy="606.4" r="5.4" fill="#000" stroke="#f4f8fa" stroke-width="1.1"/>
<circle cx="748.4" cy="643.5" r="5.4" fill="#000" stroke="#f4f8fa" stroke-width="1.1"/>
<circle cx="725.5" cy="679.6" r="5.4" fill="#000" stroke="#f4f8fa" stroke-width="1.1"/>
<circle cx="703.3" cy="716.5" r="5.4" fill="#000" stroke="#f4f8fa" stroke-width="1.1"/>
<circle cx="900.6" cy="482.4" r="5.4" fill="#000" stroke="#f4f8fa" stroke-width="1.1"/>
<circle cx="877.5" cy="517.9" r="5.4" fill="#000" stroke="#f4f8fa" stroke-width="1.1"/>
<circle cx="855.3" cy="555.4" r="5.4" fill="#000" stroke="#f4f8fa" stroke-width="1.1"/>
<circle cx="832.2" cy="591.4" r="5.4" fill="#000" stroke="#f4f8fa" stroke-width="1.1"/>
<circle cx="810.1" cy="627.4" r="5.4" fill="#000" stroke="#f4f8fa" stroke-width="1.1"/>
<circle cx="854.4" cy="312.5" r="6.6" fill="#fff" stroke="#000" stroke-width="1.4"/>
<circle cx="854.4" cy="312.5" r="4.4" fill="#000"/>
<g stroke="#00ffff" stroke-width="1.1" fill="none">
<path d="M825.9,353.7 L834.5,342.5 M832,346.5 L877.4,368 M864.7,371.1 L872.9,356.8"/>
<path d="M833.5,347.2 L841.6,353.3 L843.4,349.700 Z M869.3,364.2 L859.4,361.700 L861.2,358.100 Z" stroke-width=".9"/>
<path d="M912,343 L980.1,373.5 M985.6,347.4 L966.4,382.4"/>
<path d="M975,369.5 L979.5,358.5 L983.5,360.8 Z M973,373.5 L968.8,384 L964.8,381.8 Z" stroke-width="1"/>
<path d="M626.5,435.3 L634,424.5 M630.1,430.6 L638.7,434.9"/>
</g>
<g fill="#00ffff" font-family="Liberation Sans, Noto Sans CJK SC, sans-serif" font-size="15">
<text x="884" y="375" textLength="69" lengthAdjust="spacingAndGlyphs">间距 16.00</text>
<text x="975.5" y="351.5" textLength="20" lengthAdjust="spacingAndGlyphs">0.0</text>
<text x="645" y="440.5" font-size="14" textLength="28" lengthAdjust="spacingAndGlyphs">0.00</text>
</g>
<rect x="620.6" y="436.4" width="8" height="8" fill="#fff" stroke="#000" stroke-width="1"/>
<rect x="870.5" y="351.4" width="8" height="8" fill="#fff" stroke="#000" stroke-width="1"/>
<rect x="903.5" y="336.4" width="8" height="8" fill="#fff" stroke="#000" stroke-width="1"/>
<g stroke="#ad7436" stroke-width="1" fill="#ad7436">
<path d="M623.7,731.4 L641.2,704.2 M623.7,731.4 L616.7,717.4 M623.7,731.4 L652.8,744.2" fill="none"/>
<path d="M641.2,704.2 L639.2,713 L634.6,710.2 Z M616.7,717.4 L623.3,722.6 L618.8,725 Z M652.8,744.2 L643.6,743.2 L645.8,738.2 Z"/>
</g>
<text x="519.5" y="745" fill="#a9753f" font-family="Liberation Sans, sans-serif" font-size="15" textLength="102" lengthAdjust="spacingAndGlyphs">PRT_CSYS_DEF</text>
<g fill="#111" font-family="Liberation Sans, sans-serif" font-size="15">
<text x="642" y="702">Y</text><text x="603" y="715">Z</text><text x="654" y="759">X</text>
</g>
<text x="817" y="185.2" fill="#ff2626" font-family="Liberation Sans, Noto Sans CJK SC, sans-serif" font-weight="350" font-size="16" textLength="191" lengthAdjust="spacing">选中红色面作几何阵列即可</text>
</g>
<g fill="#fb3838">
<path d="M245.4,71.5 L245.7,72 L291.8,160 L335.5,240 L384.5,340 L459.3,480 L519.5,600 L575.8,710 L579,709 L578.5,725 L565.7,714.8 L568.4,714.3 L510.4,600 L451.3,480 L378.5,340 L330.4,240 L288.6,160 L244.9,72 Z"/>
<path d="M721.5,26.1 L737.5,33.4 L733.9,35.6 L793.6,114.7 L727.5,40.5 L725.2,43.7 Z"/>
<path d="M487,196.5 L527,217 L551,229.1 L574,240.6 L598,252.7 L621,263.9 L691,301.6 L693,298.4 L704,312.5 L685.2,311.5 L687.4,308.6 L621,273.3 L598,259.8 L574,246.2 L551,233 L527,219.4 L487,197.1 Z"/>
<path d="M868.5,201.5 L861.5,278.5 L867,279.6 L856.8,294.5 L851,277.8 L856.5,278.2 Z"/>
</g>
</svg>
<!-- ===== watermark ===== -->
<div class="abs" style="left:809px;top:715px;width:206px;height:61px;background:rgba(255,255,255,.34);z-index:6"></div>
<svg style="left:809px;top:715px;z-index:7" width="206" height="61" viewBox="0 0 206 61">
 <path d="M38.6,38.7 C39.3,37.6 42.6,34.4 43,31.8 C43.4,29.2 43.2,26.4 41.2,23.1 C39.2,19.8 35.4,14.9 30.8,11.8 C26.2,8.8 18.0,4.7 13.4,4.8 C8.8,4.9 4.5,9.6 3,12.7 C1.6,15.8 3.2,19.9 4.7,23.1 C6.2,26.3 8.8,29.3 11.7,31.8 C14.6,34.3 21.8,37.9 22.1,37.9 C22.4,37.9 15.7,34.3 13.4,31.8 C11.1,29.3 9.2,25.7 8.2,23.1 C7.2,20.5 6.1,18.6 7.3,16.1 C8.4,13.6 11.5,8.6 15.1,8.3 C18.7,8.0 24.9,11.7 29,14.4 C33.1,17.1 37.5,21.9 39.5,24.8 C41.5,27.7 41.4,29.5 41.2,31.8 C41.1,34.1 39.0,37.6 38.6,38.7 Z" fill="#5a82b8" opacity=".85"/>
 <path d="M24.7,32.2 C23.2,32.6 18.5,32.6 16,34.4 C13.5,36.2 10.2,40.6 9.9,43.1 C9.6,45.6 12.3,48.3 14.3,49.2 C16.3,50.1 19.9,49.0 22.1,48.3 C24.3,47.6 27.5,45.0 27.3,44.8 C27.1,44.6 23.1,46.6 21.2,47 C19.2,47.4 17.1,48.0 15.6,47.4 C14.2,46.8 12.2,45.0 12.5,43.1 C12.8,41.2 15.3,37.9 17.3,36.1 C19.3,34.3 23.5,32.9 24.7,32.2 Z" fill="#7a9ccc" opacity=".7"/>
 <path d="M32.5,33.5 C34.0,31.9 38.3,26.2 41.2,24 C44.1,21.8 47.3,20.4 49.9,20.5 C52.5,20.6 55.4,22.6 56.9,24.8 C58.4,27.0 59.0,30.0 58.6,33.5 C58.2,37.0 56.9,41.9 54.3,45.7 C51.7,49.5 46.5,54.4 43,56.1 C39.5,57.8 35.8,57.4 33.4,56.1 C31.0,54.8 28.5,48.7 28.6,48.3 C28.8,47.9 31.9,52.8 34.3,53.5 C36.7,54.2 40.2,54.3 43,52.7 C45.8,51.1 49.0,47.2 50.8,44 C52.6,40.8 53.6,36.7 53.8,33.5 C53.9,30.3 52.8,26.5 51.7,24.8 C50.6,23.1 49.3,22.7 47.3,23.1 C45.3,23.5 42.0,25.7 39.5,27.4 C37.0,29.1 33.7,32.5 32.5,33.5 Z" fill="#c4688f" opacity=".85"/>
 <text x="69" y="31" font-family="'Liberation Serif','Noto Serif CJK SC',serif" font-weight="bold" font-size="27" fill="#56a79c" textLength="118" lengthAdjust="spacing">野火论坛</text>
 <text x="58" y="54" font-family="'Liberation Sans',sans-serif" font-size="17" fill="#8cbde0" textLength="143" lengthAdjust="spacingAndGlyphs">www.proewildfire.cn</text>
</svg>

</body>
</html>
